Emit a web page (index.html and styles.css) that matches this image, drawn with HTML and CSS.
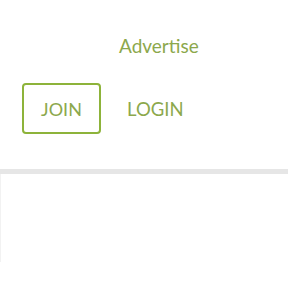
FILE: index.html
```html
<!DOCTYPE html>
<html>
<head>
<meta charset="utf-8">
<link rel="stylesheet" href="styles.css">
</head>
<body>
<header class="header">
  <div class="top-links"><a class="link" href="#">Advertise</a></div>
  <div class="auth">
    <a class="btn-join" href="#">JOIN</a>
    <a class="btn-login" href="#">LOGIN</a>
  </div>
</header>
<div class="divider"></div>
<div class="content"></div>
</body>
</html>
```
FILE: styles.css
```css
html, body { margin: 0; padding: 0; background: #fff; }
body { font-family: "Lato", "Open Sans", sans-serif; width: 288px; height: 288px; overflow: hidden; }
.header { height: 169px; box-sizing: border-box; }
.top-links { padding: 34px 0 0 119px; height: 83px; box-sizing: border-box; }
.link { color: #8ca84c; font-size: 19px; text-decoration: none; line-height: 24px; }
.auth { display: flex; align-items: center; gap: 26px; padding-left: 22px; }
.btn-join {
  display: flex; align-items: center; justify-content: center;
  width: 79px; height: 51px; box-sizing: border-box;
  border: 2px solid #8db33a; border-radius: 4px;
  color: #8ca84c; font-size: 18px; text-decoration: none;
}
.btn-login { color: #8ca84c; font-size: 18.5px; text-decoration: none; }
.divider { height: 5px; background: #e6e6e6; }
.content { height: 88px; border-left: 1px solid #f2f2f2; }
```
